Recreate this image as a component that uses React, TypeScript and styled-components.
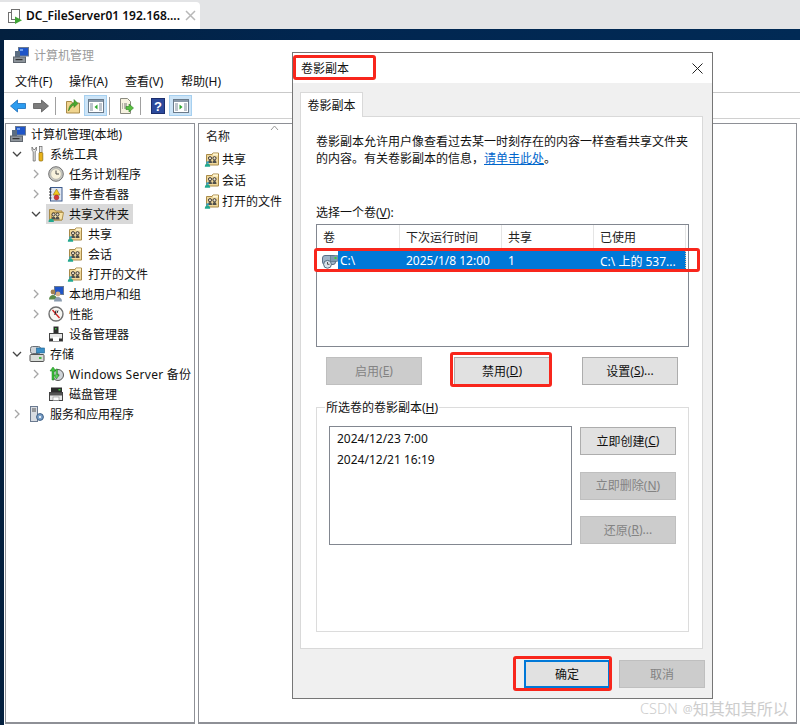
import React from "react";
import styled, { createGlobalStyle } from "styled-components";

const Global = createGlobalStyle`
  html, body { margin: 0; padding: 0; background: #fff; }
  body { font-family: "Noto Sans", "Noto Sans CJK SC", "Liberation Sans", sans-serif; font-size: 12px; color: #111; }
  * { box-sizing: border-box; }
`;

const Page = styled.div`
  position: relative;
  width: 800px;
  height: 725px;
  overflow: hidden;
  display: flex;
  flex-direction: column;
`;
const TabBar = styled.div`
  height: 29px;
  flex: none;
  background: #e3e4e6;
  padding-top: 2px;
`;
const SessionTab = styled.div`
  width: 200px;
  height: 27px;
  background: #fff;
  border-radius: 0 4px 0 0;
  display: flex;
  align-items: center;
  padding-left: 7px;
  font-size: 12px;
  font-weight: 600;
  color: #0c0c0c;
`;
const TabTitle = styled.span`
  margin-left: 3px;
  width: 159px;
  white-space: nowrap;
`;
const Desktop = styled.div`
  flex: 1;
  min-height: 0;
  background: linear-gradient(90deg, #03203f, #012650 40%, #012a55);
  padding: 11px 0 0 4px;
  display: flex;
`;
const MmcWindow = styled.div`
  flex: 1;
  background: #fff;
  display: flex;
  flex-direction: column;
`;
const MmcTitle = styled.div`
  height: 29px;
  flex: none;
  display: flex;
  align-items: center;
  gap: 5px;
  padding: 0 0 0 9px;
  color: #9b9b9b;
`;
const MenuBar = styled.div`
  height: 24px;
  flex: none;
  display: flex;
  align-items: center;
  padding-left: 11px;
  border-bottom: 1px solid #c9c9c9;
`;
const MenuItem = styled.span`
  width: 56px;
  flex: none;
  &:first-child { width: 54px; }
`;
const ToolBar = styled.div`
  height: 26px;
  flex: none;
  display: flex;
  align-items: center;
  padding-left: 6px;
  border-bottom: 1px solid #d0d0d0;
`;
const ToolButton = styled.div<{ $active?: boolean; $gap: number }>`
  width: ${(p) => (p.$active ? 23 : 16)}px;
  height: ${(p) => (p.$active ? 21 : 16)}px;
  margin-left: ${(p) => p.$gap}px;
  display: flex;
  align-items: center;
  justify-content: center;
  background: ${(p) => (p.$active ? "#cce4f7" : "transparent")};
  border: ${(p) => (p.$active ? "1px solid #a6d0f0" : "none")};
`;
const ToolSep = styled.div<{ $gap: number }>`
  width: 1px;
  height: 18px;
  margin-left: ${(p) => p.$gap}px;
  background: #a0a0a0;
`;
const Panes = styled.div`
  flex: 1;
  min-height: 0;
  display: flex;
  gap: 3px;
  padding: 4px 3px 1px 1px;
`;
const Pane = styled.div<{ $w?: number }>`
  ${(p) => (p.$w ? `width:${p.$w}px;flex:none;` : "flex:1;")}
  border: 1px solid #8e9096;
  border-width: 1px 1px 2px 1px;
  position: relative;
  min-width: 0;
`;
const TreeRow = styled.div<{ $level: number }>`
  height: 20px;
  display: flex;
  align-items: center;
  padding-left: ${(p) => 4 + 19 * Math.max(0, p.$level - 1)}px;
  white-space: nowrap;
`;
const ChevronSlot = styled.div`
  width: 19px;
  padding-left: 2px;
  flex: none;
  display: flex;
  align-items: center;
`;
const TreeNode = styled.div<{ $selected?: boolean }>`
  display: flex;
  align-items: center;
  gap: 5px;
  height: 20px;
  margin-left: -2px;
  padding: 0 4px 0 2px;
  background: ${(p) => (p.$selected ? "#d9d9d9" : "transparent")};
`;
const WideLabel = styled.span`
  letter-spacing: 0.28px;
`;
const ListHeader = styled.div`
  height: 24px;
  padding-left: 7px;
  display: flex;
  align-items: center;
  color: #222;
  position: relative;
`;
const SortCaret = styled.svg`
  position: absolute;
  left: 71px;
  top: 1px;
  width: 9px;
  height: 6px;
`;
const ListRow = styled.div`
  height: 21px;
  padding-left: 5px;
  display: flex;
  align-items: center;
  gap: 2px;
`;
const Glyph = styled.svg`
  width: 16px;
  height: 16px;
  flex: none;
  display: block;
`;

const Dialog = styled.div`
  position: absolute;
  left: 292px;
  top: 52px;
  width: 421px;
  height: 647px;
  background: #f0f0f0;
  border: 1px solid #767676;
  display: flex;
  flex-direction: column;
`;
const DialogTitle = styled.div`
  height: 30px;
  flex: none;
  background: #fff;
  display: flex;
  align-items: center;
  justify-content: space-between;
  padding: 0 9px 0 8px;
`;
const CloseMark = styled.svg`
  width: 11px;
  height: 11px;
`;
const DialogBody = styled.div`
  flex: 1;
  display: flex;
  flex-direction: column;
  padding: 9px 7px 10px 7px;
`;
const TabStrip = styled.div`
  display: flex;
  height: 24px;
  flex: none;
  position: relative;
  z-index: 1;
`;
const TabLabel = styled.div`
  width: 63px;
  height: 25px;
  background: #fff;
  border: 1px solid #d9d9d9;
  border-bottom: none;
  display: flex;
  align-items: center;
  justify-content: center;
  padding-bottom: 1px;
`;
const TabPanel = styled.div`
  width: 403px;
  height: 533px;
  flex: none;
  background: #fff;
  border: 1px solid #d9d9d9;
  padding: 16px 13px 0 15px;
  display: flex;
  flex-direction: column;
`;
const IntroLine = styled.div`
  height: 17px;
  line-height: 17px;
  white-space: nowrap;
`;
const Link = styled.span`
  color: #0066cc;
  text-decoration: underline;
`;
const Caption = styled.div`
  margin-top: 37px;
  height: 17px;
  line-height: 17px;
`;
const Key = styled.span`
  text-decoration: underline;
`;
const VolumeList = styled.div`
  margin-top: 3px;
  height: 123px;
  border: 1px solid #828790;
  background: #fff;
  flex: none;
`;
const ColumnGrid = styled.div`
  display: grid;
  grid-template-columns: 83px 102px 92px 92px;
  height: 25px;
  color: #222;
`;
const HeadCell = styled.div`
  border-right: 1px solid #e5e5e5;
  padding: 0 0 1px 6px;
  display: flex;
  align-items: center;
`;
const VolumeRow = styled.div`
  height: 19px;
  margin-top: 1px;
  display: flex;
  padding-left: 5px;
`;
const RowIcon = styled.div`
  width: 16px;
  flex: none;
  display: flex;
  align-items: center;
`;
const SelectedBand = styled.div`
  width: 348px;
  display: grid;
  grid-template-columns: 62px 102px 92px 92px;
  background: #0078d7;
  color: #fff;
  border-right: 1px dotted #e8c89a;
`;
const BandCell = styled.div`
  padding-left: 6px;
  display: flex;
  align-items: center;
  white-space: nowrap;
  &:first-child { padding-left: 2px; }
`;
const ActionRow = styled.div`
  margin-top: 10px;
  padding: 0 11px 0 10px;
  display: flex;
  justify-content: space-between;
`;
const Btn = styled.div<{ $disabled?: boolean; $w?: number }>`
  width: ${(p) => p.$w ?? 96}px;
  height: 28px;
  padding-bottom: 1px;
  background: ${(p) => (p.$disabled ? "#cccccc" : "#e1e1e1")};
  border: 1px solid ${(p) => (p.$disabled ? "#bfbfbf" : "#adadad")};
  color: ${(p) => (p.$disabled ? "#838383" : "#111")};
  display: flex;
  align-items: center;
  justify-content: center;
  flex: none;
`;
const DefaultBtn = styled(Btn)`
  border: 2px solid #0078d7;
`;
const Group = styled.div`
  margin: 22px 0 0;
  padding: 18px 12px 0 12px;
  width: 373px;
  height: 225px;
  border: 1px solid #dcdcdc;
  display: flex;
  position: relative;
`;
const Legend = styled.div`
  position: absolute;
  left: 8px;
  top: -8px;
  background: #fff;
  padding: 0 1px;
  line-height: 16px;
`;
const GroupInner = styled.div`
  display: flex;
  gap: 8px;
  align-items: flex-start;
`;
const CopyList = styled.div`
  width: 243px;
  height: 119px;
  border: 1px solid #828790;
  padding: 1px 7px;
`;
const CopyItem = styled.div`
  height: 21px;
  line-height: 21px;
`;
const SideButtons = styled.div`
  display: flex;
  flex-direction: column;
  gap: 16.5px;
  padding-top: 1px;
`;
const DialogFooter = styled.div`
  margin-top: 11px;
  display: flex;
  justify-content: flex-end;
  gap: 9px;
`;
const Annotation = styled.div<{ $x: number; $y: number; $w: number; $h: number }>`
  position: absolute;
  left: ${(p) => p.$x}px;
  top: ${(p) => p.$y}px;
  width: ${(p) => p.$w}px;
  height: ${(p) => p.$h}px;
  border: 3px solid #f8261c;
  border-radius: 3px;
  pointer-events: none;
`;
const Watermark = styled.div`
  position: absolute;
  left: 640px;
  top: 697px;
  height: 22px;
  display: flex;
  align-items: center;
  font-size: 16px;
  color: #cdcdcd;
  white-space: nowrap;
`;
const WatermarkBrand = styled.span`
  font-size: 14.5px;
  font-weight: 300;
  margin-right: 5px;
`;
const WatermarkAt = styled.span`
  font-size: 11px;
`;

const shareBase = (
  <>
    <path d="M2.500 14V3.500H8l1-1.500h5.500v12z" fill="#efd79a" stroke="#a98a48" />
    <path d="M9 2.500h5v2H9z" fill="#fff6d2" />
    <circle cx="6" cy="7.200" r="1.600" fill="#e8dcc8" stroke="#2e2e2e" strokeWidth=".9" />
    <circle cx="10.500" cy="7.200" r="1.600" fill="#e8dcc8" stroke="#2e2e2e" strokeWidth=".9" />
    <path d="M4 12c0-2 .8-3 2-3s2 1 2 3zM8.500 12c0-2 .8-3 2-3s2 1 2 3z" fill="#4f4f4a" />
    <path d="M.8 15.800c0-2.200 1.200-3.300 2.700-3.300s2.700 1.100 2.700 3.300z" fill="#22a890" />
    <circle cx="3.500" cy="11.500" r="1.300" fill="#2f9fc0" />
  </>
);

const icons: Record<string, React.ReactNode> = {
  session: (
    <>
      <rect x="1.500" y="4.500" width="8" height="10" fill="#fff" stroke="#707070" />
      <rect x="4.500" y="1.500" width="8" height="10" fill="#fff" stroke="#707070" />
      <path d="M8 8.500l7 3.700L8 16z" fill="#3fa535" />
    </>
  ),
  computer: (
    <>
      <rect x="5.500" y="0.500" width="10" height="8.500" fill="#1f55c8" stroke="#6b7a90" />
      <path d="M7 2h3v2H7z" fill="#6fa0f0" />
      <rect x="2" y="4" width="5" height="6" fill="#5b6d82" />
      <rect x="0.500" y="10" width="12" height="5.500" fill="#8e959c" stroke="#5f666e" />
      <rect x="2.500" y="12" width="7" height="1.200" fill="#333" />
    </>
  ),
  tools: (
    <>
      <path d="M3 1v3.500l1.200 1V15h2V5.500l1.200-1V1L6 3.500H4.500z" fill="#e8e8e8" stroke="#6a6a6a" strokeWidth=".8" />
      <rect x="10.500" y="0.500" width="2.500" height="6" fill="#e6e6e6" stroke="#666" strokeWidth=".7" />
      <rect x="10" y="6.500" width="3.800" height="8.500" rx="1" fill="#e8b21a" stroke="#8b6a0a" strokeWidth=".7" />
    </>
  ),
  clock: (
    <>
      <circle cx="8" cy="8" r="7.300" fill="#c9c9c4" stroke="#6f6f6f" />
      <circle cx="8" cy="8" r="5.300" fill="#f8f2dc" stroke="#a8a8a0" strokeWidth=".6" />
      <path d="M8 4.500V8h3" fill="none" stroke="#444" />
    </>
  ),
  eventlog: (
    <>
      <rect x="2.500" y="1.500" width="11.500" height="13.500" fill="#dfe6f2" stroke="#3c5a8c" />
      <path d="M1 3h2.500M1 6h2.500M1 9h2.500M1 12h2.500" stroke="#333" />
      <path d="M8.500 3l3.500 6H5z" fill="#f2c81e" stroke="#7a6410" strokeWidth=".5" />
      <circle cx="8.500" cy="11.500" r="2.400" fill="#d43838" stroke="#8a1c1c" strokeWidth=".5" />
    </>
  ),
  shareOpen: (
    <>
      <path d="M1.500 14V3.500h5l1 1.500h6.500v9z" fill="#e8c87a" stroke="#a98a48" />
      <path d="M3 14l1.500-7.500h11L14 14z" fill="#f6e2a6" stroke="#b09350" />
      <circle cx="5.500" cy="8.500" r="1.500" fill="#e8dcc8" stroke="#2e2e2e" strokeWidth=".9" />
      <circle cx="9.500" cy="8.500" r="1.500" fill="#e8dcc8" stroke="#2e2e2e" strokeWidth=".9" />
      <path d="M3.500 13.500c0-2 .8-3 2-3s2 1 2 3zM7.500 13.500c0-2 .8-3 2-3s2 1 2 3z" fill="#4f4f4a" />
      <path d="M.5 16c0-2.200 1.200-3.300 2.700-3.300s2.700 1.100 2.700 3.300z" fill="#22a890" />
    </>
  ),
  share: shareBase,
  users: (
    <>
      <rect x="6.500" y="0.500" width="9" height="8" fill="#1f55c8" stroke="#6b7a90" />
      <circle cx="5" cy="6" r="2.400" fill="#a08050" />
      <path d="M1 13.500c0-3 2-4.500 4-4.500s4 1.500 4 4.500z" fill="#5a8a4a" />
      <circle cx="10" cy="8" r="2.400" fill="#d8b088" />
      <path d="M6 15.500c0-3 2-4.500 4-4.500s4 1.500 4 4.500z" fill="#8a9cb0" />
    </>
  ),
  perf: (
    <>
      <circle cx="8" cy="8" r="7" fill="#f6f6f2" stroke="#707070" strokeWidth="1.400" />
      <path d="M4.500 4l7 8" stroke="#d02020" strokeWidth="1.400" />
      <path d="M8 4.500L6.800 9M9 7l1-2.500" stroke="#222" />
    </>
  ),
  device: (
    <>
      <rect x="5.500" y="0.500" width="5" height="7" fill="#2c2c2c" />
      <rect x="7" y="2" width="1.500" height="1.500" fill="#3fc83f" />
      <rect x="1.500" y="7.500" width="13" height="7.500" fill="#e8e8e8" stroke="#444" />
      <rect x="2" y="12.500" width="12" height="2.500" fill="#333" />
      <rect x="5" y="11" width="6" height="4" fill="#fff" />
    </>
  ),
  storage: (
    <>
      <rect x="1.500" y="0.500" width="10" height="7" rx="2" fill="#cfd4d8" stroke="#6a7076" />
      <rect x="7.500" y="2" width="8" height="5" fill="#3a8fc8" stroke="#1f5f8a" strokeWidth=".6" />
      <rect x="1" y="8.500" width="14" height="7" rx="1" fill="#d8dcd8" stroke="#555" />
      <rect x="10" y="11" width="2.500" height="2" fill="#48b848" />
    </>
  ),
  backup: (
    <>
      <circle cx="10" cy="9" r="5.500" fill="#d0d4d8" stroke="#555" />
      <circle cx="10" cy="9" r="1.500" fill="#888" />
      <path d="M4 14V5H2l3-4 3 4H6v9z" fill="#3cc23c" stroke="#1a7a1a" strokeWidth=".5" />
      <path d="M8 3v6H6l2.500 4L11 9H9.500V3z" fill="#5ad25a" stroke="#1a7a1a" strokeWidth=".5" />
    </>
  ),
  disk: (
    <>
      <rect x="3" y="1.500" width="11" height="5" fill="#2c2c2c" />
      <rect x="10.500" y="3" width="2" height="1.500" fill="#3fc83f" />
      <rect x="1.500" y="6.500" width="13" height="8" fill="#e8e8e8" stroke="#444" />
      <rect x="2" y="7" width="12" height="2.500" fill="#555" />
      <rect x="5" y="11" width="6" height="3.500" fill="#fff" stroke="#777" strokeWidth=".5" />
    </>
  ),
  services: (
    <>
      <rect x="1.500" y="0.500" width="7" height="15" fill="#d8dce2" stroke="#6b7a90" />
      <path d="M3 3h4M3 5h4" stroke="#555" />
      <circle cx="11" cy="11" r="3.400" fill="#7aa0c8" stroke="#3e5e84" />
      <circle cx="11" cy="11" r="1.100" fill="#fff" />
    </>
  ),
  back: <path d="M.5 8l7-6v3.500H15.500v5H7.500V14z" fill="#2c9cf0" stroke="#1b6cb8" strokeWidth=".8" />,
  forward: <path d="M15.500 8l-7-6v3.500H.5v5h8V14z" fill="#7c7c7c" stroke="#5a5a5a" strokeWidth=".8" />,
  up: (
    <>
      <path d="M1.500 15V3.500h5l1 1.500h7v10z" fill="#f0d48e" stroke="#a98a48" />
      <path d="M3.500 13c.5-5 2.500-7.500 5.500-8V1.500L13 5.500 9 9.500V7C7 7.500 5.500 9.500 3.500 13z" fill="#48a830" stroke="#2a7018" strokeWidth=".5" />
    </>
  ),
  paneL: (
    <>
      <rect x=".5" y="1.500" width="15" height="13" fill="#fff" stroke="#6a7a8a" />
      <rect x="1" y="2" width="14" height="2" fill="#8a9aaa" />
      <path d="M2 6h3M2 8h3M2 10h3M2 12h3M11 6h3M11 8h3M11 10h3M11 12h3" stroke="#7a8a9a" />
      <path d="M9.500 6.500v5L6.500 9z" fill="#2ea82e" />
    </>
  ),
  paneR: (
    <>
      <rect x=".5" y="1.500" width="15" height="13" fill="#fff" stroke="#6a7a8a" />
      <rect x="1" y="2" width="14" height="2" fill="#8a9aaa" />
      <path d="M2 6h3M2 8h3M2 10h3M2 12h3M11 6h3M11 8h3M11 10h3M11 12h3" stroke="#7a8a9a" />
      <path d="M6.500 6.500v5L9.500 9z" fill="#2ea82e" />
    </>
  ),
  exportList: (
    <>
      <path d="M2.500 .5h7l3 3v12h-10z" fill="#f6f2df" stroke="#8a8a80" />
      <path d="M4 6h1M6 6h3M4 8h1M6 8h3M4 10h1M6 10h2" stroke="#555" strokeWidth=".8" />
      <path d="M8 8.500h3V6l4.500 4-4.500 4v-2.500H8z" fill="#58c040" stroke="#2c8020" strokeWidth=".6" />
    </>
  ),
  help: (
    <>
      <rect x="1.500" y="0.500" width="13" height="15" fill="#2c4a9c" stroke="#1c2e6c" />
      <text x="8" y="13" textAnchor="middle" fontSize="13" fontWeight="700" fill="#fff" fontFamily="Liberation Sans">?</text>
    </>
  ),
  shadow: (
    <>
      <rect x="0.500" y="2.500" width="13" height="9" rx="2.500" fill="#9fb4c8" stroke="#5a7088" />
      <rect x="8.500" y="2.500" width="7" height="6" fill="#7e9ab0" stroke="#4e6a80" strokeWidth=".6" />
      <rect x="12.500" y="4" width="2" height="2" fill="#3ccc3c" />
      <circle cx="5.500" cy="11.300" r="3.900" fill="#d8e2ea" stroke="#4e6a80" />
      <path d="M5.500 9v2.300h2" stroke="#333" fill="none" strokeWidth=".8" />
    </>
  ),
};

const Icon = ({ name }: { name: string }) => <Glyph viewBox="0 0 16 16">{icons[name]}</Glyph>;

const Chevron = ({ open }: { open?: boolean }) => (
  <svg width="10" height="10" viewBox="0 0 10 10">
    {open ? (
      <path d="M1 3l4 4 4-4" fill="none" stroke="#444" strokeWidth="1.300" />
    ) : (
      <path d="M3 1l4 4-4 4" fill="none" stroke="#a6a6a6" strokeWidth="1.300" />
    )}
  </svg>
);

type Node = { level: number; icon: string; label: string; chevron?: "open" | "closed"; selected?: boolean; wide?: boolean };

const tree: Node[] = [
  { level: 0, icon: "computer", label: "计算机管理(本地)" },
  { level: 1, icon: "tools", label: "系统工具", chevron: "open" },
  { level: 2, icon: "clock", label: "任务计划程序", chevron: "closed" },
  { level: 2, icon: "eventlog", label: "事件查看器", chevron: "closed" },
  { level: 2, icon: "shareOpen", label: "共享文件夹", chevron: "open", selected: true },
  { level: 3, icon: "share", label: "共享" },
  { level: 3, icon: "share", label: "会话" },
  { level: 3, icon: "share", label: "打开的文件" },
  { level: 2, icon: "users", label: "本地用户和组", chevron: "closed" },
  { level: 2, icon: "perf", label: "性能", chevron: "closed" },
  { level: 2, icon: "device", label: "设备管理器" },
  { level: 1, icon: "storage", label: "存储", chevron: "open" },
  { level: 2, icon: "backup", label: "Windows Server 备份", chevron: "closed", wide: true },
  { level: 2, icon: "disk", label: "磁盘管理" },
  { level: 1, icon: "services", label: "服务和应用程序", chevron: "closed" },
];

export default function App() {
  return (
    <Page>
      <Global />
      <TabBar>
        <SessionTab>
          <Icon name="session" />
          <TabTitle>DC_FileServer01 192.168....</TabTitle>
          <CloseMark viewBox="0 0 11 11">
            <path d="M1 1l9 9M10 1l-9 9" stroke="#b8b8b8" strokeWidth="1.500" />
          </CloseMark>
        </SessionTab>
      </TabBar>
      <Desktop>
        <MmcWindow>
          <MmcTitle>
            <Icon name="computer" />
            计算机管理
          </MmcTitle>
          <MenuBar>
            <MenuItem>文件(F)</MenuItem>
            <MenuItem>操作(A)</MenuItem>
            <MenuItem>查看(V)</MenuItem>
            <MenuItem>帮助(H)</MenuItem>
          </MenuBar>
          <ToolBar>
            <ToolButton $gap={0}><Icon name="back" /></ToolButton>
            <ToolButton $gap={7}><Icon name="forward" /></ToolButton>
            <ToolSep $gap={6} />
            <ToolButton $gap={9}><Icon name="up" /></ToolButton>
            <ToolButton $active $gap={3}><Icon name="paneL" /></ToolButton>
            <ToolSep $gap={2} />
            <ToolButton $gap={8}><Icon name="exportList" /></ToolButton>
            <ToolSep $gap={6} />
            <ToolButton $gap={9}><Icon name="help" /></ToolButton>
            <ToolButton $active $gap={3}><Icon name="paneR" /></ToolButton>
          </ToolBar>
          <Panes>
            <Pane $w={190}>
              {tree.map((n) => (
                <TreeRow key={n.label + n.level} $level={n.level}>
                  {n.level > 0 && (
                    <ChevronSlot>{n.chevron && <Chevron open={n.chevron === "open"} />}</ChevronSlot>
                  )}
                  <TreeNode $selected={n.selected}>
                    <Icon name={n.icon} />
                    {n.wide ? <WideLabel>{n.label}</WideLabel> : <span>{n.label}</span>}
                  </TreeNode>
                </TreeRow>
              ))}
            </Pane>
            <Pane>
              <ListHeader>
                名称
                <SortCaret viewBox="0 0 9 6">
                  <path d="M1 5l3.500-4L8 5" fill="none" stroke="#999" />
                </SortCaret>
              </ListHeader>
              <ListRow><Icon name="share" />共享</ListRow>
              <ListRow><Icon name="share" />会话</ListRow>
              <ListRow><Icon name="share" />打开的文件</ListRow>
            </Pane>
          </Panes>
        </MmcWindow>
      </Desktop>

      <Dialog>
        <DialogTitle>
          <span>卷影副本</span>
          <CloseMark viewBox="0 0 11 11">
            <path d="M.5.5l10 10M10.500.5l-10 10" stroke="#222" strokeWidth="1" />
          </CloseMark>
        </DialogTitle>
        <DialogBody>
          <TabStrip>
            <TabLabel>卷影副本</TabLabel>
          </TabStrip>
          <TabPanel>
            <IntroLine>卷影副本允许用户像查看过去某一时刻存在的内容一样查看共享文件夹</IntroLine>
            <IntroLine>
              <span>的内容。有关卷影副本的信息，</span>
              <Link>请单击此处</Link>
              <span>。</span>
            </IntroLine>
            <Caption>选择一个卷(<Key>V</Key>):</Caption>
            <VolumeList>
              <ColumnGrid>
                <HeadCell>卷</HeadCell>
                <HeadCell>下次运行时间</HeadCell>
                <HeadCell>共享</HeadCell>
                <HeadCell>已使用</HeadCell>
              </ColumnGrid>
              <VolumeRow>
                <RowIcon><Icon name="shadow" /></RowIcon>
                <SelectedBand>
                  <BandCell>C:\</BandCell>
                  <BandCell>2025/1/8 12:00</BandCell>
                  <BandCell>1</BandCell>
                  <BandCell>C:\ 上的 537...</BandCell>
                </SelectedBand>
              </VolumeRow>
            </VolumeList>
            <ActionRow>
              <Btn $disabled>启用(<Key>E</Key>)</Btn>
              <Btn>禁用(<Key>D</Key>)</Btn>
              <Btn>设置(<Key>S</Key>)...</Btn>
            </ActionRow>
            <Group>
              <Legend>所选卷的卷影副本(<Key>H</Key>)</Legend>
              <GroupInner>
                <CopyList>
                  <CopyItem>2024/12/23 7:00</CopyItem>
                  <CopyItem>2024/12/21 16:19</CopyItem>
                </CopyList>
                <SideButtons>
                  <Btn>立即创建(<Key>C</Key>)</Btn>
                  <Btn $disabled>立即删除(<Key>N</Key>)</Btn>
                  <Btn $disabled>还原(<Key>R</Key>)...</Btn>
                </SideButtons>
              </GroupInner>
            </Group>
          </TabPanel>
          <DialogFooter>
            <DefaultBtn $w={86}>确定</DefaultBtn>
            <Btn $w={86} $disabled>取消</Btn>
          </DialogFooter>
        </DialogBody>
      </Dialog>

      <Annotation $x={293} $y={55} $w={83} $h={25} />
      <Annotation $x={314} $y={248} $w={386} $h={24} />
      <Annotation $x={450} $y={352} $w={102} $h={35} />
      <Annotation $x={513} $y={656} $w={99} $h={35} />
      <Watermark>
        <WatermarkBrand>CSDN</WatermarkBrand>
        <WatermarkAt>@</WatermarkAt>
        知其知其所以
      </Watermark>
    </Page>
  );
}
